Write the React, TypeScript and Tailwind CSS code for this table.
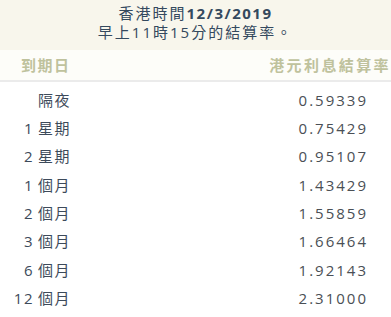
import React from "react";

const ROWS: { n?: string; label: string; rate: string }[] = [
  { label: "隔夜", rate: "0.59339" },
  { n: "1", label: "星期", rate: "0.75429" },
  { n: "2", label: "星期", rate: "0.95107" },
  { n: "1", label: "個月", rate: "1.43429" },
  { n: "2", label: "個月", rate: "1.55859" },
  { n: "3", label: "個月", rate: "1.66464" },
  { n: "6", label: "個月", rate: "1.92143" },
  { n: "12", label: "個月", rate: "2.31000" },
];

// HIBOR fixing table
const App: React.FC = () => {
  return (
    <div
      className="w-[391px] h-[317px] overflow-hidden bg-white"
      style={{ fontFamily: '"Open Sans", "Noto Sans CJK TC", sans-serif' }}
    >
      {/* Title band */}
      <div className="h-[50px] bg-[#f8f6ec] pt-[4px] text-center text-[15px] leading-[19px] text-[#34495e] tracking-[2px]">
        <div>
          香港時間<span className="font-bold tracking-[1.5px]">12/3/2019</span>
        </div>
        <div>早上11時15分的結算率。</div>
      </div>

      {/* Column headers */}
      <div className="flex items-center h-[32px] bg-[#fdfdf9] border-b-2 border-[#ebebeb] text-[15px] font-semibold text-[#bfc29d] whitespace-nowrap">
        <div className="w-[70px] pl-[21px] tracking-[1.5px]">到期日</div>
        <div className="flex-1 text-right tracking-[2.4px]">港元利息結算率</div>
      </div>

      {/* Rows */}
      <div className="pt-[4px]">
        {ROWS.map((r, i) => (
          <div
            key={i}
            className="flex items-center h-[28.3px] text-[15px] text-[#4a4f55]"
          >
            <div className="w-[71px] text-right tracking-[1.5px] text-[#3d4a5a]">
              {r.n && <span className="mr-[4px]">{r.n}</span>}
              {r.label}
            </div>
            <div className="flex-1 text-right pr-[23px] tracking-[2px]">
              {r.rate}
            </div>
          </div>
        ))}
      </div>
    </div>
  );
};

export default App;
